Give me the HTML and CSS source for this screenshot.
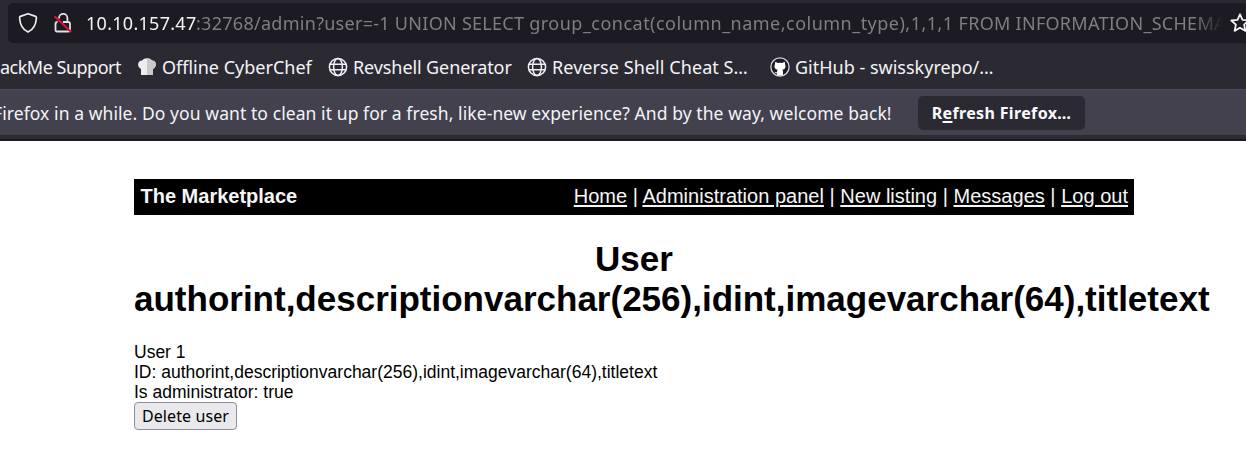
FILE: index.html
```
<!DOCTYPE html>
<html lang="en">
<head>
<meta charset="utf-8">
<title>User</title>
<link rel="stylesheet" href="styles.css">
</head>
<body>
<header class="browser">
  <div class="toolbar">
    <div class="urlbar">
      <svg class="shield" width="20" height="22" viewBox="0 0 20 22"><path d="M10 1.7 L17.6 4.4 C18.4 4.7 18.5 5.3 18.4 6 C18 12.8 15 17.8 10 20.1 C5 17.8 2 12.8 1.6 6 C1.5 5.3 1.6 4.7 2.4 4.4 Z" fill="none" stroke="#ececf0" stroke-width="1.7" stroke-linejoin="round"/></svg>
      <svg class="lock" width="20" height="22" viewBox="0 0 20 22"><path d="M6 6.6V6a4 4 0 0 1 8.4 0V10M10 10h5a2 2 0 0 1 2 2v6a1.500 1.500 0 0 1-1.500 1.500H4a1.500 1.500 0 0 1-1.500-1.500v-6q0-2 2-2" fill="none" stroke="#e4e4e8" stroke-width="1.8"/><path d="M1.600 4.200L18.200 20" stroke="#e2103f" stroke-width="2"/></svg>
      <div class="url"><span class="host">10.10.157.47</span><span class="path">:32768/admin?user=-1 UNION SELECT <span class="columns">group_concat(column_name,column_type),1,1,1</span> FROM INFORMATION_SCHEMA</span></div>
      <svg class="star" width="20" height="20" viewBox="0 0 20 20"><path d="M10 1.300l2.500 5.500 6.200.7-4.600 4.100 1.300 6.300-5.400-3.100-5.400 3.100 1.300-6.300L1.300 7.500l6.200-.7z" fill="none" stroke="#f2f2f5" stroke-width="1.800" stroke-linejoin="round"/></svg>
    </div>
  </div>
  <nav class="bookmarks">
    <span class="bm bm-support"><span class="label">ackMe Support</span></span>
    <span class="bm bm-chef"><svg width="20" height="20" viewBox="0 0 20 20"><path d="M4 18V12C0 10 0 3.500 5.200 3.500 7 .5 13 .5 14.800 3.500 20 3.500 20 10 16 12V18Z" fill="#ededed"/><path d="M10 1.300C12 1.300 14 2 14.800 3.500 20 3.500 20 10 16 12V18H10Z" fill="#c9c9c9"/></svg><span class="label">Offline CyberChef</span></span>
    <span class="bm bm-rev"><svg width="20" height="20" viewBox="0 0 20 20"><g fill="none" stroke="#f0f0f4" stroke-width="1.500"><circle cx="10" cy="10" r="8.600"/><ellipse cx="10" cy="10" rx="4.400" ry="8.600"/><path d="M2 7.200h16M2 12.800h16"/></g></svg><span class="label">Revshell Generator</span></span>
    <span class="bm bm-cheat"><svg width="20" height="20" viewBox="0 0 20 20"><g fill="none" stroke="#f0f0f4" stroke-width="1.500"><circle cx="10" cy="10" r="8.600"/><ellipse cx="10" cy="10" rx="4.400" ry="8.600"/><path d="M2 7.200h16M2 12.800h16"/></g></svg><span class="label">Reverse Shell Cheat S…</span></span>
    <span class="bm bm-git"><svg width="20" height="20" viewBox="0 0 20 20"><circle cx="10" cy="10" r="9.100" fill="#1d1c22" stroke="#d8d8dc" stroke-width="1.300"/><path d="M5.300 4.800l2.600 1.200q2.100-.5 4.200 0l2.600-1.200.4 2.500c1.100 3.300-.2 5.100-2.800 5.500q.7.800.7 1.800v3.400q-3 1-6 0v-1.800c-1.500.3-2-.6-2.700-1.500 1 .1 1.400.9 2.700.5q0-1.500.7-2.400c-2.600-.4-3.900-2.200-2.800-5.500z" fill="#fff"/></svg><span class="label">GitHub - swisskyrepo/…</span></span>
  </nav>
  <div class="notice">
    <span class="message">Firefox in a while. Do you want to clean it up for a fresh, like-new experience? And by the way, welcome back!</span>
    <button class="refresh"><span class="refresh-label">R<u>e</u>fresh Firefox…</span></button>
  </div>
</header>
<main class="page">
  <nav class="site-nav">
    <b>The Marketplace</b>
    <span class="links"><a href="#">Home</a> | <a href="#">Administration panel</a> | <a href="#">New listing</a> | <a href="#">Messages</a> | <a href="#">Log out</a></span>
  </nav>
  <h1>User authorint,descriptionvarchar(256),idint,imagevarchar(64),titletext</h1>
  <div class="user">
    <div>User 1</div>
    <div class="uid">ID: authorint,descriptionvarchar(256),idint,imagevarchar(64),titletext</div>
    <div>Is administrator: true</div>
    <button class="delete">Delete user</button>
  </div>
</main>
</body>
</html>
```
FILE: styles.css
```
* { box-sizing: border-box; }
body { margin: 0; height: 471px; overflow: hidden; background: #fff; font-family: "Liberation Sans", Arial, sans-serif; }
svg { display: block; flex: none; }

.browser { height: 141px; background: #2b2a33; color: #f4f4f7; font-family: "Noto Sans", "Open Sans", sans-serif; font-size: 18px; white-space: nowrap; border-bottom: 2px solid #1c1b22; overflow: hidden; }
.toolbar { height: 43px; padding: 3px 0 0 8px; }
.urlbar { display: flex; align-items: center; height: 40px; padding-left: 10px; background: #1c1b22; border-radius: 5px 0 0 5px; overflow: hidden; }
.lock { margin-left: 15px; }
.url { flex: none; display: flex; width: 1136px; margin-left: 13px; overflow: hidden; letter-spacing: .28px; -webkit-mask-image: linear-gradient(to right, #000 1108px, transparent 1137px); mask-image: linear-gradient(to right, #000 1108px, transparent 1137px); }
.host { flex: none; width: 110px; }
.path { color: #7f7e84; }
.columns { letter-spacing: .48px; }
.star { margin-left: 8px; }

.bookmarks { display: flex; align-items: center; height: 47px; margin-bottom: -1px; }
.bm { display: flex; align-items: center; gap: 5px; flex: none; }
.bm-support { width: 137px; letter-spacing: -.5px; }
.bm-chef { width: 191px; }
.bm-rev { width: 199px; letter-spacing: -.1px; }
.bm-cheat { width: 243px; letter-spacing: .07px; }

.notice { display: flex; align-items: center; height: 46px; background: #42414d; border-top: 1px solid #4b4a55; }
.message { flex: none; width: 918px; margin-left: -7px; font-size: 17.5px; letter-spacing: .08px; }
.notice .refresh { width: 167px; height: 34px; margin-left: 7px; padding: 0; border: 0; border-radius: 5px; background: #2b2a33; color: #fbfbfe; font: 700 16px "Noto Sans", sans-serif; letter-spacing: .35px; }
.refresh u { text-decoration-thickness: 2px; text-underline-offset: 2px; text-decoration-skip-ink: none; }

.page { width: 1000px; margin: 37.5px 0 0 134px; color: #000; }
.site-nav { display: flex; justify-content: space-between; align-items: center; height: 36px; padding: 0 6px 1px 6.5px; background: #000; color: #f6f6f6; font-size: 20px; }
.links { letter-spacing: .015px; }
.site-nav a { color: #f6f6f6; text-underline-offset: 2px; }
h1 { margin: 24.5px 0 23px; font-size: 35px; line-height: 40px; text-align: center; }
.user { font-size: 17.5px; line-height: 20px; }
.delete { display: block; width: 103px; height: 28px; padding: 0; border: 1px solid #8f8f9d; border-radius: 4px; background: #e9e9ed; color: #000; font: 16px "Noto Sans", sans-serif; letter-spacing: .1px; }
```
